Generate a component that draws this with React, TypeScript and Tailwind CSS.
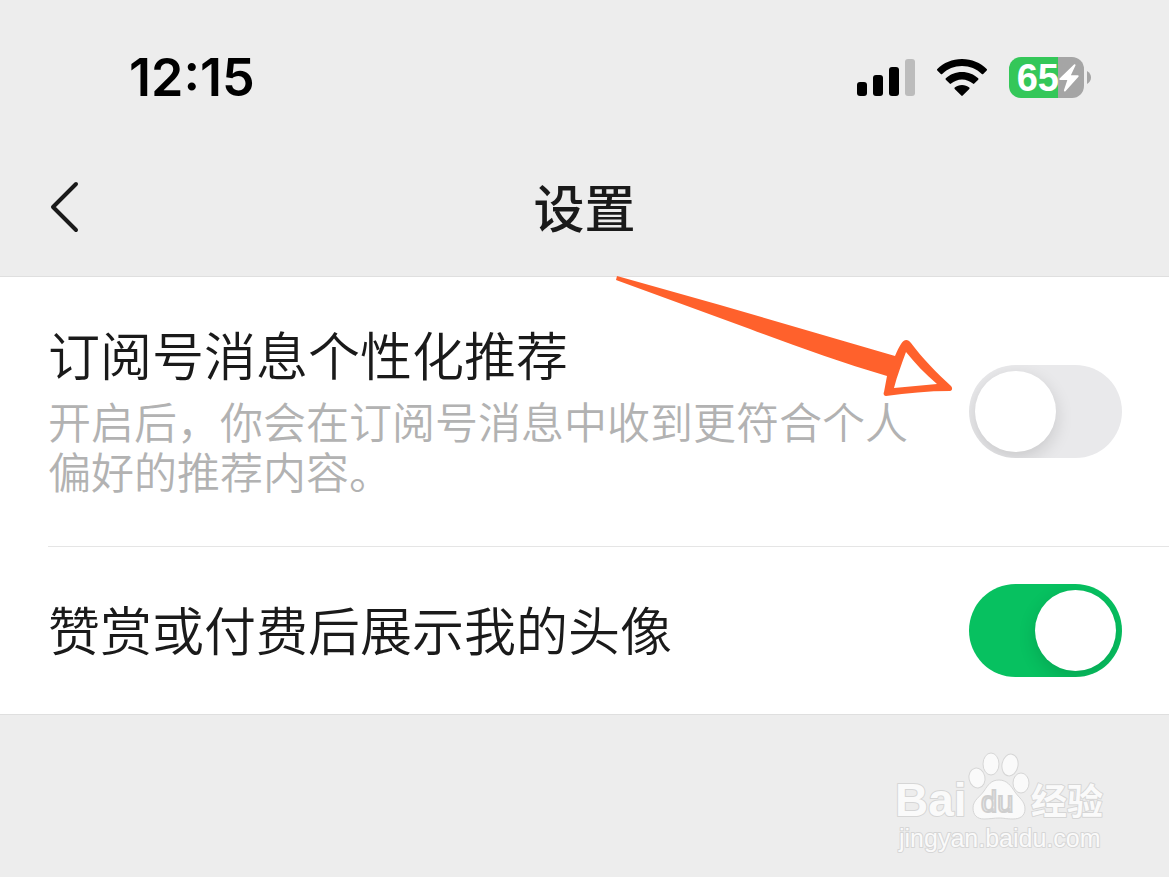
import React, { useState } from "react";

const SignalIcon = () => (
  <svg width="58" height="37" viewBox="0 0 58 37" aria-hidden="true">
    <rect x="0" y="23" width="10" height="14" rx="3" fill="#000" />
    <rect x="16" y="16" width="10" height="21" rx="3" fill="#000" />
    <rect x="32" y="8" width="10" height="29" rx="3" fill="#000" />
    <rect x="48" y="0" width="10" height="37" rx="3" fill="#bcbcbc" />
  </svg>
);

const WifiIcon = () => (
  <svg width="50" height="37" viewBox="0 0 50 37" aria-hidden="true">
    <path d="M25 0C34.800 0 43.400 3.800 49.700 10C50.100 10.400 50.100 11 49.700 11.400L46.200 14.900C45.800 15.300 45.200 15.300 44.800 14.900C39.600 10 32.700 7 25 7S10.400 10 5.200 14.900C4.800 15.300 4.200 15.300 3.800 14.900L.3 11.400C-.1 11-.1 10.400 .3 10C6.600 3.800 15.200 0 25 0Z" />
    <path d="M25 13C31.300 13 37 15.400 41.200 19.300C41.600 19.700 41.600 20.300 41.200 20.700L37.300 24.600C36.900 25 36.300 25 35.900 24.600C33 22 29.200 20.400 25 20.400S17 22 14.100 24.600C13.700 25 13.100 25 12.700 24.600L8.800 20.700C8.400 20.300 8.400 19.700 8.800 19.300C13 15.400 18.700 13 25 13Z" />
    <path d="M25 26C27.800 26 30.300 27 32.300 28.600C32.700 29 32.700 29.600 32.300 30L25.700 36.600C25.300 37 24.700 37 24.300 36.600L17.700 30C17.300 29.600 17.300 29 17.700 28.600C19.700 27 22.200 26 25 26Z" />
  </svg>
);

const Battery = () => (
  <div className="flex items-center gap-[3px]">
    <div className="flex h-[41px] w-[75px] items-center justify-end rounded-[12px] bg-linear-to-r from-[#34c759] from-65% to-[#a5a5a5] to-65% pr-[5px]">
      <span className="font-['Liberation_Sans',sans-serif] text-[38px] leading-none font-bold text-white">65</span>
      <svg width="20" height="28" viewBox="0 0 18 28" preserveAspectRatio="none" aria-hidden="true">
        <path d="M13.500 .5L.5 14.500C0 15.200 .3 16 1.200 16H7.500L4.500 26C4.100 27.500 5.200 28 6 27L17.500 12.800C18 12 17.700 11.300 16.800 11.300H10.700L14.800 1.500C15.200 .3 14.300-.3 13.500 .5Z" fill="#fff" />
      </svg>
    </div>
    <svg width="4" height="13" viewBox="0 0 4 13" aria-hidden="true">
      <path d="M0 0C2.500 1.500 4 3.800 4 6.500S2.500 11.500 0 13Z" fill="#a5a5a5" />
    </svg>
  </div>
);

const StatusBar = () => (
  <div className="flex h-[138px] items-center justify-between pt-[17px] pr-[78px] pl-[129px] font-['Inter',sans-serif]">
    <span className="text-[52px] leading-none font-semibold text-black">12:15</span>
    <div className="flex items-center gap-[22px]">
      <SignalIcon />
      <WifiIcon />
      <Battery />
    </div>
  </div>
);

interface SwitchProps {
  id: string;
  checked: boolean;
  onChange: (value: boolean) => void;
}

const Switch = ({ id, checked, onChange }: SwitchProps) => (
  <input
    id={id}
    type="checkbox"
    role="switch"
    checked={checked}
    onChange={(e) => onChange(e.target.checked)}
    className="h-[93px] w-[153px] shrink-0 cursor-pointer appearance-none overflow-hidden rounded-full bg-[#e9e9eb] p-[6px] transition-colors before:block before:size-[81px] before:rounded-full before:bg-white before:shadow-[0_6px_18px_rgba(0,0,0,0.14)] before:transition-transform checked:bg-[#07c160] checked:before:translate-x-[60px]"
  />
);

const Arrow = () => (
  <svg
    className="pointer-events-none absolute -top-[2px] right-[215px]"
    width="340"
    height="124"
    viewBox="614 275 340 124"
    aria-hidden="true"
  >
    <path
      fill="#ff612c"
      fillRule="evenodd"
      d="M617 276L720 305L895 356C897 351 899 347 901 344C904 339 908 339 911 343C922 358 937 373 951 386C953 388 952 391 950 391C928 391 907 393 886 396C884 396 883 394 884 392L887 376C840 362 795 346 750 329L616 280ZM906 352C902 363 897 376 894 388L937 384C925 374 915 363 906 352Z"
    />
  </svg>
);

const Watermark = () => (
  <svg
    className="mt-[34px] mr-[60px] ml-auto block"
    width="216"
    height="106"
    viewBox="893 748 216 106"
    role="img"
    aria-label="Baidu"
  >
    <g fill="#fafafa" stroke="#d6d6d6" strokeWidth="1">
      <ellipse cx="977" cy="777" rx="8" ry="10" transform="rotate(-12 977 777)" />
      <ellipse cx="991" cy="763" rx="8" ry="11" />
      <ellipse cx="1010" cy="764" rx="8" ry="11" transform="rotate(10 1010 764)" />
      <ellipse cx="1021" cy="782" rx="8" ry="10" />
      <path d="M999 779C1007 779 1011 785 1015 791C1019 797 1025 800 1025 808C1025 815 1020 818 1013 818C1006 818 1004 817 999 817C994 817 990 818 984 818C977 818 973 814 973 807C973 799 980 796 984 790C988 784 991 779 999 779Z" />
    </g>
    <g fill="#fafafa" stroke="#d6d6d6" strokeWidth="2" strokeLinejoin="round" style={{ paintOrder: "stroke" }}>
      <text x="895" y="815" fontSize="46" fontWeight="700" fontFamily="Liberation Sans, sans-serif">Bai</text>
      <text x="1031" y="814" fontSize="36" fontWeight="700" fontFamily="Noto Sans CJK SC, sans-serif">经验</text>
      <text x="899" y="846" fontSize="25" fontFamily="Liberation Sans, sans-serif">jingyan.baidu.com</text>
    </g>
    <text x="981" y="811" fontSize="29" fill="#fafafa" stroke="#cfcfcf" strokeWidth="2" fontFamily="Liberation Sans, sans-serif">du</text>
  </svg>
);

const App = () => {
  const [recommend, setRecommend] = useState(false);
  const [showAvatar, setShowAvatar] = useState(true);

  return (
    <div className="min-h-screen bg-[#ededed] font-['Noto_Sans_CJK_SC',sans-serif] text-[#1a1a1a]">
      <header className="border-b border-[#dfdfdf]">
        <StatusBar />
        <div className="grid h-[138px] grid-cols-[1fr_auto_1fr] items-center px-[50px]">
          <button type="button" aria-label="返回" className="justify-self-start">
            <svg width="30" height="52" viewBox="0 0 30 52" fill="none" aria-hidden="true">
              <path d="M26 3L3 26L26 49" stroke="#1a1a1a" strokeWidth="4" strokeLinecap="round" strokeLinejoin="round" />
            </svg>
          </button>
          <h1 className="pb-[2px] text-[51px] leading-none font-medium">设置</h1>
        </div>
      </header>

      <main>
        <div className="border-b border-[#dfdfdf] bg-white pl-[48px]">
          <div className="relative flex items-center justify-between border-b border-[#e5e5e5] pt-[42px] pr-[47px] pb-[43px]">
            <div className="max-w-[870px] pb-[8px]">
              <label htmlFor="recommend" className="block text-[52px] leading-[70px] font-[350]">
                订阅号消息个性化推荐
              </label>
              <p className="mt-[6px] text-[43px] leading-[50px] font-[350] text-[#b2b2b2]">
                开启后，你会在订阅号消息中收到更符合个人偏好的推荐内容。
              </p>
            </div>
            <Switch id="recommend" checked={recommend} onChange={setRecommend} />
            <Arrow />
          </div>
          <div className="flex h-[167px] items-center justify-between pr-[47px]">
            <label htmlFor="avatar" className="pb-[4px] text-[52px] leading-[70px] font-[350]">
              赞赏或付费后展示我的头像
            </label>
            <Switch id="avatar" checked={showAvatar} onChange={setShowAvatar} />
          </div>
        </div>
        <Watermark />
      </main>
    </div>
  );
};

export default App;
